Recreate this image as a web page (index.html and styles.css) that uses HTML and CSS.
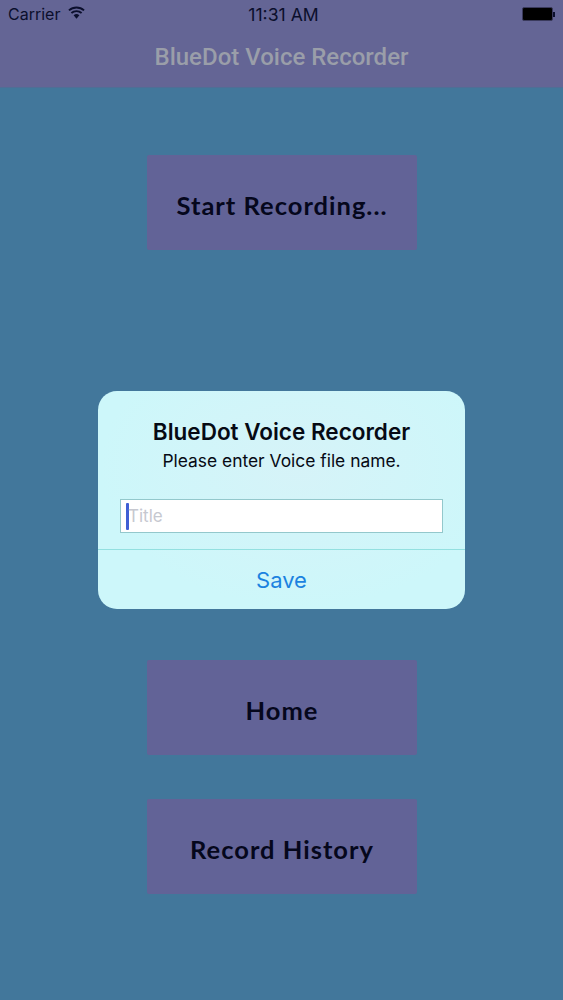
FILE: index.html
```html
<!DOCTYPE html>
<html lang="en">
<head>
<meta charset="utf-8">
<title>BlueDot Voice Recorder</title>
<link rel="stylesheet" href="styles.css">
</head>
<body>
<div class="screen">
  <header class="nav">
    <div class="status">
      <div class="status-left">
        <span>Carrier</span>
        <svg class="wifi" viewBox="0 0 16 12" width="17" height="13" aria-hidden="true">
          <path d="M8 11.8 5.3 8.6a4 4 0 0 1 5.4 0Z" fill="#0b0f2c"/>
          <path d="M.9 4a10.6 10.6 0 0 1 14.2 0M3.2 6.5a7.2 7.2 0 0 1 9.6 0" fill="none" stroke="#0b0f2c" stroke-width="1.8"/>
        </svg>
      </div>
      <div class="status-time">11:31 AM</div>
      <div class="status-right">
        <div class="battery"></div>
        <div class="battery-tip"></div>
      </div>
    </div>
    <div class="nav-title">BlueDot Voice Recorder</div>
  </header>
  <main class="content">
    <button class="action action-start">Start Recording...</button>
    <button class="action action-home">Home</button>
    <button class="action action-history">Record History</button>
  </main>
  <div class="alert">
    <div class="alert-body">
      <div class="alert-title">BlueDot Voice Recorder</div>
      <div class="alert-message">Please enter Voice file name.</div>
      <div class="field"><span class="caret"></span><span class="placeholder">Title</span></div>
    </div>
    <div class="alert-button">Save</div>
  </div>
</div>
</body>
</html>
```
FILE: styles.css
```css
* { box-sizing: border-box; }
html, body { margin: 0; padding: 0; }
body { font-family: "Liberation Sans", Arial, sans-serif; }
.screen {
  position: relative;
  width: 563px;
  height: 1000px;
  overflow: hidden;
  background: #42779b;
}
.nav {
  height: 88px;
  background: #646595;
  border-bottom: 1px solid #4f6e96;
}
.status {
  display: grid;
  grid-template-columns: 1fr auto 1fr;
  align-items: center;
  height: 28px;
  padding: 0 8px 0 8px;
  font-family: Inter, sans-serif;
  font-size: 16px;
  color: #0b0f2c;
}
.status-left { display: flex; align-items: center; gap: 8px; }
.wifi { margin-top: -3px; }
.status-time { font-size: 17.6px; margin-left: 4px; }
.status-right { display: flex; justify-content: flex-end; align-items: center; }
.battery {
  width: 31px;
  height: 14px;
  background: #000;
  border: 1px solid #3a3a5c;
  border-radius: 2px;
}
.battery-tip { width: 2px; height: 5px; background: #0b0f2c; }
.nav-title {
  margin-top: 13px;
  text-align: center;
  font-family: Roboto, sans-serif;
  font-weight: 500;
  font-size: 24px;
  line-height: 32px;
  color: #9a9ea9;
}
.content {
  display: flex;
  flex-direction: column;
  align-items: flex-start;
  padding-top: 67px;
  padding-left: 147px;
}
.action {
  width: 270px;
  height: 95px;
  padding: 5px 0 0;
  border: 0;
  background: #626397;
  border-radius: 2px;
  font-family: Lato, sans-serif;
  font-weight: 700;
  font-size: 25.5px;
  color: #05071c;
  letter-spacing: 1px;
}
.action-home { margin-top: 410px; }
.action-history { margin-top: 44px; }
.alert {
  position: absolute;
  left: 98px;
  top: 391px;
  width: 367px;
  height: 218px;
  border-radius: 19px;
  background: radial-gradient(ellipse at 55% 35%, #d6f3f8 0%, #cdf7fa 70%);
  display: flex;
  flex-direction: column;
}
.alert-body {
  height: 159px;
  padding: 28px 22px 0;
  text-align: center;
  border-bottom: 1px solid #93e0e0;
}
.alert-title {
  font-family: Inter, sans-serif;
  font-weight: 600;
  font-size: 22.5px;
  line-height: 26px;
  color: #060a14;
}
.alert-message {
  margin-top: 4px;
  font-family: Inter, sans-serif;
  font-size: 17.4px;
  line-height: 24px;
  color: #060a14;
}
.field {
  display: flex;
  align-items: center;
  height: 34px;
  margin-top: 26px;
  padding-left: 5px;
  background: #fff;
  border: 1px solid #93c8cc;
  font-family: Inter, sans-serif;
  font-size: 17px;
  color: #c6c8d0;
  text-align: left;
}
.caret { width: 3px; height: 27px; background: #3f5fd4; border-radius: 1px; margin-right: -1px; }
.alert-button {
  flex: 1;
  display: flex;
  align-items: center;
  justify-content: center;
  font-family: Inter, sans-serif;
  font-size: 22px;
  color: #1b82e0;
}
```
